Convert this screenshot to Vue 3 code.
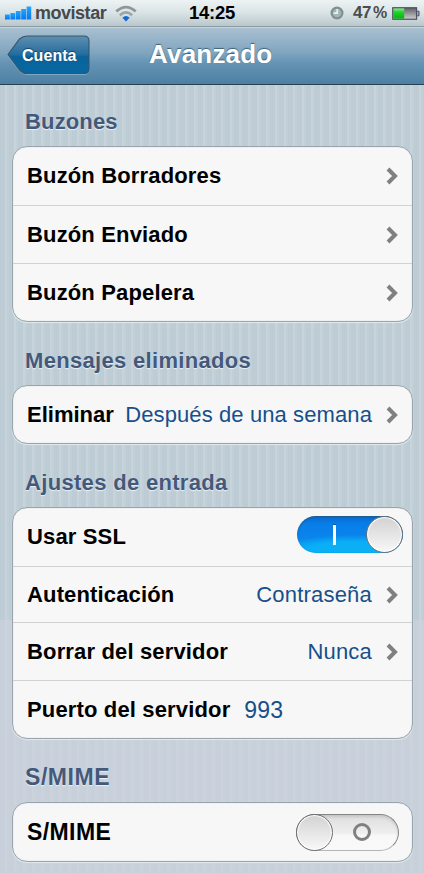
<script setup>
const groups = [
  {
    title: 'Buzones',
    name: 'mailboxes',
    rows: [
      { label: 'Buzón Borradores', arrow: true },
      { label: 'Buzón Enviado', arrow: true },
      { label: 'Buzón Papelera', arrow: true },
    ],
  },
  {
    title: 'Mensajes eliminados',
    name: 'deleted',
    rows: [{ label: 'Eliminar', value: 'Después de una semana', arrow: true }],
  },
  {
    title: 'Ajustes de entrada',
    name: 'incoming',
    rows: [
      { label: 'Usar SSL', toggle: 'on' },
      { label: 'Autenticación', value: 'Contraseña', arrow: true },
      { label: 'Borrar del servidor', value: 'Nunca', arrow: true },
      { label: 'Puerto del servidor', value: '993', field: true },
    ],
  },
  { title: 'S/MIME', name: 'smime', rows: [{ label: 'S/MIME', toggle: 'off' }] },
]
</script>

<template>
  <div class="screen">
    <header class="status">
      <svg class="signal" width="27" height="14" viewBox="0 0 27 14">
        <defs>
          <linearGradient id="sig" x1="0" y1="0" x2="0" y2="1">
            <stop offset="0" stop-color="#22a4ff" />
            <stop offset="1" stop-color="#0878ea" />
          </linearGradient>
        </defs>
        <g fill="url(#sig)">
          <rect x="0" y="8.5" width="4.8" height="5" />
          <rect x="5.4" y="7" width="4.8" height="6.5" />
          <rect x="10.8" y="5" width="4.8" height="8.5" />
          <rect x="16.2" y="3" width="4.8" height="10.5" />
          <rect x="21.6" y="0.5" width="4.6" height="13" />
        </g>
      </svg>
      <span class="carrier">movistar</span>
      <svg class="wifi" width="22" height="17" viewBox="0 0 22 17">
        <g fill="none" stroke="#8f9599" stroke-width="2.8">
          <path d="M1.3 6.4Q11 -2.2 20.7 6.4" />
          <path d="M4.9 10.2Q11 4.6 17.1 10.2" stroke="#9da4a8" />
        </g>
        <path d="M7.4 12.8Q11 9.4 14.6 12.8L11 16.4Z" fill="#1267dc" />
      </svg>
      <span class="time">14:25</span>
      <svg class="clock" width="14" height="14" viewBox="0 0 14 14">
        <circle cx="7" cy="7" r="6.5" fill="#7d9090" />
        <circle cx="7" cy="7" r="4.3" fill="#a6b5b5" />
        <path d="M7.2 3V7.2H3.6" fill="none" stroke="#e9f0f0" stroke-width="1.7" />
      </svg>
      <span class="percent">47<span class="sign">%</span></span>
      <svg class="battery" width="28" height="13" viewBox="0 0 28 13">
        <defs>
          <linearGradient id="charge" x1="0" y1="0" x2="0" y2="1">
            <stop offset="0" stop-color="#8de98c" />
            <stop offset=".35" stop-color="#20d52a" />
            <stop offset="1" stop-color="#04b50d" />
          </linearGradient>
          <linearGradient id="cell" x1="0" y1="0" x2="0" y2="1">
            <stop offset="0" stop-color="#5e5e62" />
            <stop offset="1" stop-color="#d0d0d2" />
          </linearGradient>
        </defs>
        <rect x=".75" y=".75" width="23.8" height="11.5" fill="url(#cell)" stroke="#4c4f65" stroke-width="1.2" />
        <rect x="1.4" y="1.4" width="10.8" height="10.2" fill="url(#charge)" />
        <path d="M25.2 4.2h1.8v4.6h-1.8" fill="#9a9cb0" stroke="#4c4f65" />
      </svg>
    </header>

    <nav class="nav">
      <button class="back">
        <svg class="back-shape" width="84" height="41" viewBox="0 0 84 41">
          <defs>
            <linearGradient id="back" x1="0" y1="0" x2="0" y2="1">
              <stop offset="0" stop-color="#5f8eb0" />
              <stop offset=".5" stop-color="#236c9f" />
              <stop offset=".55" stop-color="#0a639b" />
              <stop offset="1" stop-color="#0767a1" />
            </linearGradient>
          </defs>
          <path d="M1 20.5L12.5 5Q16 2 20 2H77Q82 2 82 7V34.5Q82 39.5 77 39.5H20Q16 39.5 12.5 36Z" fill="none" stroke="#9cbfd6" stroke-opacity=".55" />
          <path d="M1 19.5L12.5 4Q16 1 20 1H77Q82 1 82 6V33.5Q82 38.5 77 38.5H20Q16 38.5 12.5 35Z" fill="url(#back)" stroke="#34566f" stroke-width="1.1" />
        </svg>
        <span class="back-text">Cuenta</span>
      </button>
      <h1 class="title">Avanzado</h1>
    </nav>

    <main class="content">
      <section v-for="group in groups" :key="group.name" class="section" :class="group.name">
        <h2 class="heading">{{ group.title }}</h2>
        <div class="card">
          <div v-for="row in group.rows" :key="row.label" class="row">
            <span class="label">{{ row.label }}</span>
            <span v-if="row.value" class="value" :class="{ field: row.field }">{{ row.value }}</span>
            <svg v-if="row.arrow" class="arrow" width="12" height="18" viewBox="0 0 12 18">
              <path d="M2 2L9 9L2 16" fill="none" stroke="#808080" stroke-width="4" />
            </svg>
            <span v-if="row.toggle" class="toggle" :class="row.toggle">
              <span class="mark"></span>
              <span class="knob"></span>
            </span>
          </div>
        </div>
      </section>
    </main>
  </div>
</template>

<style>
body {
  margin: 0;
  overflow: hidden;
}
</style>

<style scoped>
.screen {
  width: 424px;
  height: 873px;
  overflow: hidden;
  box-sizing: border-box;
  display: flex;
  flex-direction: column;
  font-family: "Liberation Sans", Arial, sans-serif;
  background:
    linear-gradient(rgba(201, 209, 219, 0) 620px, rgba(201, 209, 219, 0.65) 620px),
    repeating-linear-gradient(90deg, rgba(90, 120, 140, 0.03) 0 5px, rgba(255, 255, 255, 0.11) 5px 7px, rgba(255, 255, 255, 0) 7px 9px),
    linear-gradient(#c1cfd7 0 620px, #c9d1db 620px);
}
.status {
  height: 27px;
  flex: none;
  box-sizing: border-box;
  display: flex;
  align-items: center;
  padding-left: 5px;
  border-bottom: 1px solid #8d9ba3;
  background: linear-gradient(#edf3f4, #d9e3e5 50%, #b9c7cc);
}
.signal {
  flex: none;
}
.carrier {
  width: 79px;
  margin-left: 3px;
  font-size: 18px;
  font-weight: bold;
  line-height: 26px;
  letter-spacing: -0.48px;
  color: #47494c;
}
.wifi {
  flex: none;
  margin-left: 1px;
}
.time {
  width: 50px;
  margin-left: 52px;
  font-size: 18.5px;
  font-weight: bold;
  line-height: 26px;
  letter-spacing: -0.25px;
  color: #000;
}
.clock {
  flex: none;
  margin-left: 91px;
}
.percent {
  width: 36px;
  margin-left: 9px;
  font-size: 17px;
  font-weight: bold;
  line-height: 26px;
  letter-spacing: -0.4px;
  color: #4a4c4f;
  white-space: nowrap;
}
.sign {
  margin-left: 2px;
  font-size: 16px;
}
.battery {
  flex: none;
  margin-left: 3px;
}
.nav {
  height: 58px;
  flex: none;
  box-sizing: border-box;
  display: grid;
  grid-template-columns: 142px 1fr;
  border-top: 1px solid #c4d4df;
  border-bottom: 1px solid #294253;
  background: linear-gradient(#a9c0d0, #80a5bf 44%, #6594b4 62%, #4c80a3);
}
.back {
  display: grid;
  width: 84px;
  height: 41px;
  margin: 7px 0 0 7px;
  padding: 0;
  border: 0;
  background: none;
}
.back-shape,
.back-text {
  grid-area: 1 / 1;
}
.back-text {
  padding-left: 15px;
  font-family: inherit;
  font-size: 16px;
  font-weight: bold;
  line-height: 41px;
  letter-spacing: 0.05px;
  text-align: left;
  color: #fff;
  text-shadow: 0 -1px 1px #17435f;
}
.title {
  margin: 0 0 0 7px;
  font-size: 26px;
  line-height: 53px;
  letter-spacing: 0.2px;
  color: #fff;
  text-shadow: 0 -1px 1px #3e617b;
}
.content {
  display: flex;
  flex-direction: column;
  padding: 0 11px 0 12px;
}
.section {
  display: flex;
  flex-direction: column;
}
.heading {
  height: 63px;
  margin: 0;
  padding-left: 13px;
  box-sizing: border-box;
  font-size: 22px;
  line-height: 77px;
  letter-spacing: 0.32px;
  color: #44597a;
  text-shadow: 0 1px 1px #eaf1f5;
  white-space: nowrap;
}
.mailboxes .heading {
  height: 61px;
  line-height: 73px;
  letter-spacing: 0.15px;
}
.smime .heading {
  font-size: 23px;
  letter-spacing: 0.55px;
}
.card {
  box-sizing: border-box;
  border: 1px solid #98a5ad;
  border-radius: 15px;
  background: #f7f7f7;
  box-shadow: 0 1px 1px #e3eaef, inset 0 0 1px #a9b4ba;
}
.row {
  height: 58px;
  box-sizing: border-box;
  display: flex;
  align-items: center;
  padding: 0 14px;
}
.row + .row {
  border-top: 1px solid #cfd1d3;
}
.label {
  font-size: 22px;
  font-weight: bold;
  letter-spacing: 0.15px;
  line-height: 56px;
  color: #000;
  white-space: nowrap;
}
.smime .label {
  font-size: 23px;
  letter-spacing: 0.4px;
}
.deleted .label {
  letter-spacing: 0;
}
.value {
  margin-left: auto;
  margin-right: 14px;
  font-size: 22px;
  line-height: 56px;
  letter-spacing: 0.2px;
  color: #164f8b;
  white-space: nowrap;
}
.deleted .value {
  letter-spacing: 0.1px;
}
.value.field {
  margin-left: 14px;
  font-size: 23px;
}
.arrow {
  flex: none;
  margin-left: auto;
}
.value + .arrow {
  margin-left: 0;
}
.deleted .row {
  height: 57px;
}
.incoming .row:nth-child(2) {
  height: 56px;
  padding-top: 1px;
}
.toggle {
  display: grid;
  box-sizing: border-box;
  height: 37px;
  margin-left: auto;
  border-radius: 19px;
}
.toggle.on {
  width: 106px;
  margin-right: -5px;
  margin-bottom: 5px;
  grid-template-columns: 69px 37px;
  background:
    radial-gradient(ellipse 78px 17px at 56px 36px, #0aaff5 0 60%, rgba(8, 160, 245, 0) 100%),
    linear-gradient(#0868ce, #087de8 20%, #0a85ed 60%, #08a4f0);
  box-shadow: inset 0 1px 2px #225783;
}
.toggle.off {
  width: 103px;
  margin-right: -1px;
  grid-template-columns: 36px 1fr;
  border: 1px solid #858585;
  border-bottom-color: #b5b5b5;
  background: linear-gradient(#dedede, #eeeeee 50%, #f8f8f8 60%, #f9f9f9);
  box-shadow: inset 0 2px 3px rgba(60, 60, 60, 0.16);
}
.mark,
.knob {
  box-sizing: border-box;
  align-self: center;
}
.on .mark {
  width: 3px;
  height: 20px;
  margin-left: 36px;
  background: #fff;
  box-shadow: 0 -1px 0 #075dae;
}
.knob {
  width: 37px;
  height: 37px;
  border: 1px solid #6d7072;
  border-radius: 50%;
  background: linear-gradient(#d2d2d2, #f8f8f8);
  box-shadow: inset 0 0 1px 1px #fff;
}
.off .knob {
  grid-area: 1 / 1;
  margin: -1px 0 -1px -1px;
}
.off .mark {
  grid-area: 1 / 2;
  width: 18px;
  height: 18px;
  margin-left: 20px;
  border: 3px solid #808080;
  border-radius: 50%;
}
</style>
